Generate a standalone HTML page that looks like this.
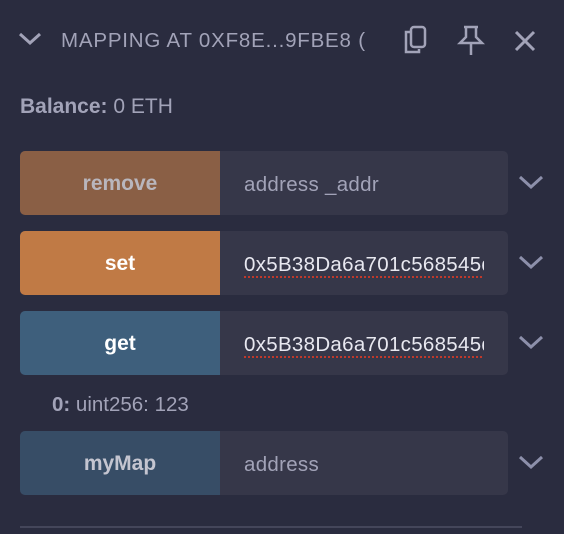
<!DOCTYPE html>
<html><head><style>
body{margin:0;width:564px;height:534px;background:#2a2c3f;font-family:"Liberation Sans",sans-serif;position:relative;overflow:hidden;color:#a2a3b8}
.a{position:absolute}
.row{position:absolute;left:20px;width:488px;height:64px;border-radius:5px;overflow:hidden;background:#363749}
.btn{position:absolute;left:0;top:0;padding-top:2px;width:200px;height:62px;display:flex;align-items:center;justify-content:center;font-weight:bold;font-size:21px}
.in{position:absolute;left:224px;top:2px;height:64px;line-height:64px;font-size:20.5px;letter-spacing:0.3px;white-space:nowrap;overflow:hidden;width:240px}
.in.v{color:#e8e8f0;text-decoration:underline dotted #c0392b;text-underline-offset:5px}
.chev{position:absolute;left:518px}
</style></head><body>
<svg class="a" style="left:18px;top:30px" width="24" height="18" viewBox="0 0 24 18"><path d="M2 4l10 9 10-9" fill="none" stroke="#a2a3b8" stroke-width="3"/></svg>
<div class="a" style="left:61px;top:29px;font-size:20.5px;letter-spacing:0.8px">MAPPING AT 0XF8E...9FBE8 (</div>
<svg class="a" style="left:401px;top:24px" width="32" height="32" viewBox="0 0 32 32" fill="none" stroke="#a2a3b8" stroke-width="2.5"><path d="M9 8H5v20h13v-3"/><rect x="10" y="3" width="14" height="20" rx="3"/></svg>
<svg class="a" style="left:456px;top:24px" width="30" height="34" viewBox="0 0 30 34" fill="none" stroke="#a2a3b8" stroke-width="2.5"><path d="M8 3h14M10 3v10l-6 6h22l-6-6V3M15 19v12"/></svg>
<svg class="a" style="left:514px;top:30px" width="22" height="22" viewBox="0 0 22 22"><path d="M2 2l18 18M20 2L2 20" stroke="#a2a3b8" stroke-width="3"/></svg>
<div class="a" style="left:20px;top:95px;font-size:21px"><b>Balance:</b> 0 ETH</div>

<div class="row" style="top:151px"><div class="btn" style="background:#8a5f45;color:#b9b6bd">remove</div><div class="in">address _addr</div></div>
<div class="row" style="top:231px"><div class="btn" style="background:#c07a45;color:#fff">set</div><div class="in v">0x5B38Da6a701c568545dCfcB03FcB875f56beddC4</div></div>
<div class="row" style="top:311px"><div class="btn" style="background:#3e5f7c;color:#fff">get</div><div class="in v">0x5B38Da6a701c568545dCfcB03FcB875f56beddC4</div></div>
<div class="a" style="left:52px;top:393px;font-size:20.5px"><b>0:</b> uint256: 123</div>
<div class="row" style="top:431px"><div class="btn" style="background:#374d66;color:#c4c5d0">myMap</div><div class="in">address</div></div>

<svg class="chev" style="top:174px" width="26" height="16" viewBox="0 0 26 16"><path d="M2 3l11 10 11-10" fill="none" stroke="#8d90ab" stroke-width="3"/></svg>
<svg class="chev" style="top:254px" width="26" height="16" viewBox="0 0 26 16"><path d="M2 3l11 10 11-10" fill="none" stroke="#8d90ab" stroke-width="3"/></svg>
<svg class="chev" style="top:334px" width="26" height="16" viewBox="0 0 26 16"><path d="M2 3l11 10 11-10" fill="none" stroke="#8d90ab" stroke-width="3"/></svg>
<svg class="chev" style="top:454px" width="26" height="16" viewBox="0 0 26 16"><path d="M2 3l11 10 11-10" fill="none" stroke="#8d90ab" stroke-width="3"/></svg>
<div class="a" style="left:20px;top:526px;width:502px;height:2px;background:#44465a"></div>
</body></html>
